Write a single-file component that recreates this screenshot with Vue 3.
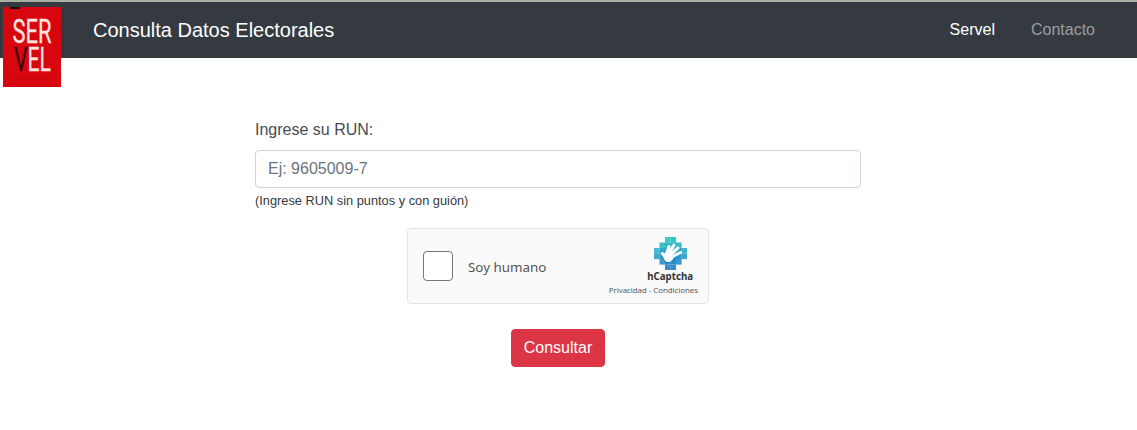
<script setup>
const rows = [
  { y: 0, cols: [2, 3], c: ['#3fc9c6', '#36c5c6'] },
  { y: 1, cols: [1, 2, 3, 4], c: ['#3fc0c9', '#2cb9c6', '#2ab5c6', '#3abcc9'] },
  { y: 2, cols: [0, 1, 2, 3, 4, 5], c: ['#46b8cf', '#2aa9c8', '#2aa6c8', '#2aa4c8', '#2aa3c8', '#46b3cf'] },
  { y: 3, cols: [0, 1, 2, 3, 4, 5], c: ['#3ea8cc', '#2a9bc9', '#2a99c9', '#2a98c9', '#2a97c9', '#3ea4cc'] },
  { y: 4, cols: [1, 2, 3, 4], c: ['#3a9bcb', '#2a8bc8', '#2a8ac8', '#3a98cb'] },
  { y: 5, cols: [2, 3], c: ['#3a8dc9', '#3a8bc9'] },
];
const tiles = rows.flatMap((r) =>
  r.cols.map((col, i) => ({ key: `${r.y}-${col}`, x: col * 5.5, y: r.y * 5.5, fill: r.c[i] }))
);
</script>

<template>
  <div class="page">
    <div class="strip"></div>
    <nav class="navbar">
      <span class="brand">Consulta Datos Electorales</span>
      <ul class="links">
        <li class="active">Servel</li>
        <li>Contacto</li>
      </ul>
    </nav>
    <svg class="logo" width="58" height="80" viewBox="0 0 58 80">
      <rect width="58" height="80" fill="#d8060f" />
      <rect x="7" y="0" width="10" height="2" fill="#1b0a0c" />
      <rect x="8" y="71" width="42" height="1" fill="#c10510" />
      <text x="9.5" y="36" class="logo-text" textLength="39" lengthAdjust="spacingAndGlyphs">SER</text>
      <text x="11" y="64" class="logo-text" textLength="37" lengthAdjust="spacingAndGlyphs"><tspan fill="#3a0508" stroke="#3a0508">V</tspan>EL</text>
    </svg>

    <main class="form">
      <label class="label" for="run">Ingrese su RUN:</label>
      <input id="run" class="input" type="text" placeholder="Ej: 9605009-7" />
      <small class="hint">(Ingrese RUN sin puntos y con guión)</small>

      <div class="captcha">
        <div class="check"></div>
        <span class="human">Soy humano</span>
        <div class="hc">
          <svg class="hc-icon" width="33" height="33" viewBox="0 0 33 33">
            <rect v-for="t in tiles" :key="t.key" :x="t.x" :y="t.y" width="5.6" height="5.6" :fill="t.fill" />
            <g stroke="#fff" stroke-width="3" stroke-linecap="round" fill="none">
              <path d="M12.5 17 L15 9.5" />
              <path d="M15 16.5 L20 8" />
              <path d="M16.5 17.5 L24 11" />
              <path d="M17.5 20 L26.5 15.5" />
              <path d="M12 21 L8.5 16.5" />
            </g>
            <path d="M9 18 C10 14.5 16 14.5 19.5 18 C20 22 17 25.5 13.5 25 C11 24.6 9.5 22 9 18 Z" fill="#fff" />
          </svg>
          <span class="hc-name">hCaptcha</span>
          <span class="hc-links">Privacidad - Condiciones</span>
        </div>
      </div>

      <button class="btn" type="button">Consultar</button>
    </main>
  </div>
</template>

<style>
html, body { margin: 0; background: #fff; }
</style>

<style scoped>
.page {
  position: relative;
  height: 430px;
  overflow: hidden;
  font-family: "Liberation Sans", Arial, sans-serif;
  color: #343a40;
}
.strip { height: 2px; background: #a9b0a2; }
.navbar {
  height: 56px;
  background: #343a40;
  display: flex;
  align-items: center;
  justify-content: space-between;
  padding: 0 42px 0 93px;
}
.brand { color: #fff; font-size: 20px; line-height: 24px; }
.links {
  display: flex;
  gap: 36px;
  margin: 0;
  padding: 0;
  list-style: none;
  font-size: 16px;
  color: rgba(255, 255, 255, 0.5);
}
.links .active { color: #fff; }
.logo { position: absolute; left: 3px; top: 7px; }
.logo-text {
  font-family: "Roboto", "Liberation Sans", sans-serif;
  font-size: 34px;
  font-weight: 400;
  fill: #fde3df;
  stroke: #fde3df;
  stroke-width: 0.3;
}
.form {
  width: 606px;
  margin: 60px 0 0 255px;
  display: flex;
  flex-direction: column;
}
.label { font-size: 16px; line-height: 24px; color: #454c53; }
.input {
  box-sizing: border-box;
  height: 38px;
  margin-top: 8px;
  padding: 6px 12px;
  border: 1px solid #ced4da;
  border-radius: 4px;
  font: 16px "Liberation Sans", Arial, sans-serif;
  color: #495057;
  background: #fff;
  outline: none;
}
.input::placeholder { color: #6c757d; opacity: 1; }
.hint { margin-top: 5px; font-size: 12.8px; line-height: 16px; color: #343a40; }
.captcha {
  box-sizing: border-box;
  align-self: center;
  width: 302px;
  height: 76px;
  margin-top: 19px;
  display: flex;
  align-items: center;
  padding: 0 10px 0 15px;
  background: #fafafa;
  border: 1px solid #e4e4e4;
  border-radius: 4px;
}
.check {
  box-sizing: border-box;
  width: 30px;
  height: 30px;
  background: #fff;
  border: 1px solid #777;
  border-radius: 4px;
}
.human {
  margin: 1px 0 0 15px;
  font: 13.4px "Noto Sans", "Open Sans", sans-serif;
  color: #555;
  flex: 1;
}
.hc {
  display: flex;
  flex-direction: column;
  align-items: flex-end;
  margin-top: 1px;
  font-family: "Noto Sans", "Open Sans", sans-serif;
}
.hc-icon { display: block; margin-right: 11px; }
.hc-name { font-size: 9.7px; line-height: 14px; font-weight: 700; color: #333; margin-right: 5px; }
.hc-links { font-size: 7.8px; line-height: 12px; color: #555; white-space: nowrap; }
.btn {
  align-self: center;
  width: 94px;
  height: 38px;
  margin-top: 25px;
  padding: 0;
  border: 1px solid #dc3545;
  border-radius: 4px;
  background: #dc3545;
  color: #fff;
  font: 16px "Liberation Sans", Arial, sans-serif;
}
</style>
